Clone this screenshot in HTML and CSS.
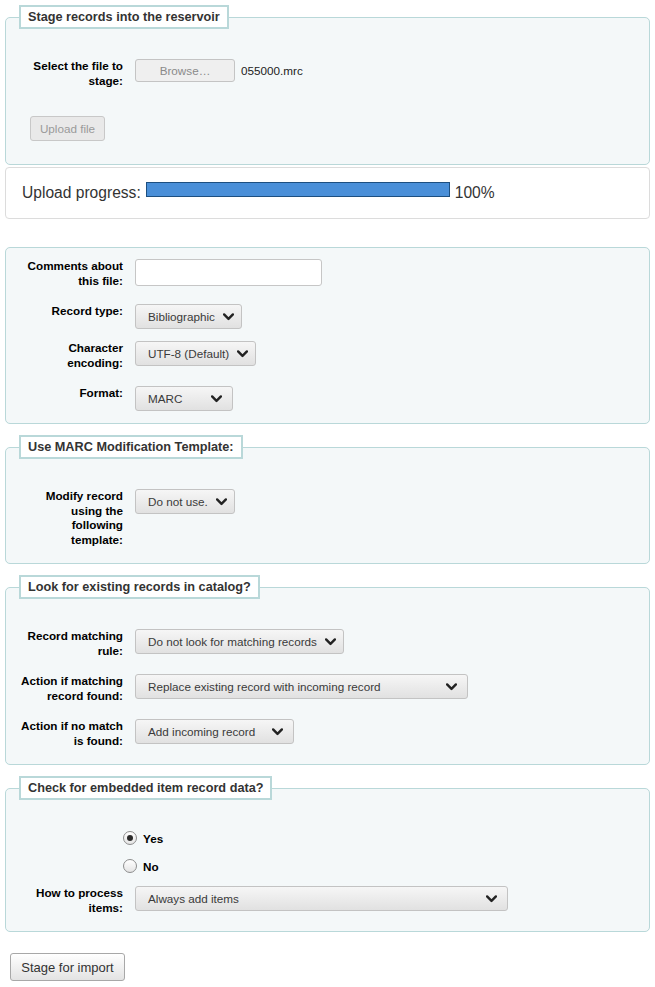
FILE: index.html
```html
<!DOCTYPE html>
<html lang="en">
<head>
<meta charset="utf-8">
<title>Stage records</title>
<link rel="stylesheet" href="styles.css">
</head>
<body>
<svg width="0" height="0" class="defs" aria-hidden="true">
  <defs>
    <symbol id="chev" viewBox="0 0 10 7">
      <polyline points="1,1.2 5,5.2 9,1.2" fill="none" stroke="#222" stroke-width="2.2" stroke-linecap="round" stroke-linejoin="round"/>
    </symbol>
  </defs>
</svg>

<fieldset class="fs fs-first">
  <legend>Stage records into the reservoir</legend>
  <div class="rows">
    <div class="row">
      <div class="lbl">Select the file to stage:</div>
      <div class="ctl">
        <span class="btn-browse">Browse…</span>
        <span class="filename">055000.mrc</span>
      </div>
    </div>
  </div>
  <div class="upload-wrap"><span class="btn-upload">Upload file</span></div>
</fieldset>

<div class="progress">
  <div class="progress-line">
    <span>Upload progress:</span><span class="bar"></span><span>100%</span>
  </div>
</div>

<fieldset class="fs fs-plain">
  <div class="rows">
    <div class="row">
      <div class="lbl">Comments about this file:</div>
      <div class="ctl"><span class="textbox"></span></div>
    </div>
    <div class="row">
      <div class="lbl">Record type:</div>
      <div class="ctl"><span class="sel w-rt"><span>Bibliographic</span><svg class="chev"><use href="#chev"/></svg></span></div>
    </div>
    <div class="row">
      <div class="lbl">Character encoding:</div>
      <div class="ctl"><span class="sel w-enc"><span>UTF-8 (Default)</span><svg class="chev"><use href="#chev"/></svg></span></div>
    </div>
    <div class="row">
      <div class="lbl">Format:</div>
      <div class="ctl"><span class="sel w-fmt"><span>MARC</span><svg class="chev"><use href="#chev"/></svg></span></div>
    </div>
  </div>
</fieldset>

<fieldset class="fs">
  <legend>Use MARC Modification Template:</legend>
  <div class="rows">
    <div class="row">
      <div class="lbl">Modify record using the following template:</div>
      <div class="ctl"><span class="sel w-tpl"><span>Do not use.</span><svg class="chev"><use href="#chev"/></svg></span></div>
    </div>
  </div>
</fieldset>

<fieldset class="fs">
  <legend>Look for existing records in catalog?</legend>
  <div class="rows">
    <div class="row">
      <div class="lbl">Record matching rule:</div>
      <div class="ctl"><span class="sel w-match"><span>Do not look for matching records</span><svg class="chev"><use href="#chev"/></svg></span></div>
    </div>
    <div class="row">
      <div class="lbl">Action if matching record found:</div>
      <div class="ctl"><span class="sel w-replace"><span>Replace existing record with incoming record</span><svg class="chev"><use href="#chev"/></svg></span></div>
    </div>
    <div class="row">
      <div class="lbl">Action if no match is found:</div>
      <div class="ctl"><span class="sel w-add"><span>Add incoming record</span><svg class="chev"><use href="#chev"/></svg></span></div>
    </div>
  </div>
</fieldset>

<fieldset class="fs">
  <legend>Check for embedded item record data?</legend>
  <div class="rows">
    <div class="radio-row"><span class="radio checked"></span><span class="radio-lbl">Yes</span></div>
    <div class="radio-row"><span class="radio"></span><span class="radio-lbl">No</span></div>
    <div class="row">
      <div class="lbl">How to process items:</div>
      <div class="ctl"><span class="sel w-items"><span>Always add items</span><svg class="chev"><use href="#chev"/></svg></span></div>
    </div>
  </div>
</fieldset>

<div class="actions"><span class="btn-stage">Stage for import</span></div>
</body>
</html>
```

FILE: styles.css
```css
html, body {
  margin: 0;
  padding: 0;
  background: #fff;
}
body {
  padding: 5px 5px 0 5px;
  font-family: "Liberation Sans", Arial, sans-serif;
  font-size: 11.7px;
  color: #000;
}
.defs {
  position: absolute;
  width: 0;
  height: 0;
}

.fs {
  margin: 11px 0 0 0;
  padding: 0 10px 6px 10px;
  border: 1px solid #b9d8d9;
  border-radius: 5px;
  background: #f4f8f9;
  min-inline-size: 0;
}
.fs-first {
  margin-top: 0;
}
.fs-plain {
  margin-top: 28px;
}
.fs legend {
  margin-left: 3px;
  padding: 2px 7px;
  border: 2px solid #b9d8d9;
  background: #fff;
  font-size: 12.7px;
  font-weight: bold;
  line-height: 16px;
  color: #333;
}

.rows {
  padding-top: 24px;
}
.fs-plain .rows {
  padding-top: 5px;
}

.row {
  display: grid;
  grid-template-columns: 107px auto;
  column-gap: 12px;
  align-items: start;
  padding: 6px 0;
}
.lbl {
  text-align: right;
  font-weight: bold;
  font-size: 11.7px;
  line-height: 14.5px;
  padding: 0 0 4px 4px;
}
.ctl {
  display: flex;
  align-items: center;
}

.btn-browse {
  box-sizing: border-box;
  width: 100px;
  height: 23px;
  display: inline-flex;
  align-items: center;
  justify-content: center;
  border: 1px solid #c4c4c4;
  border-radius: 3px;
  background: #efefef;
  color: #8a8a8a;
  font-size: 11.7px;
}
.filename {
  margin-left: 6px;
  color: #222;
  font-size: 11.7px;
}

.upload-wrap {
  padding: 18px 0 17px 14px;
}
.btn-upload {
  box-sizing: border-box;
  display: inline-flex;
  align-items: center;
  justify-content: center;
  width: 75px;
  height: 25px;
  border: 1px solid #c8c8c8;
  border-radius: 3px;
  background: #e9e9e9;
  color: #9a9a9a;
  font-size: 11.7px;
}

.progress {
  box-sizing: border-box;
  margin-top: 2px;
  height: 52px;
  border: 1px solid #dcdcdc;
  border-radius: 4px;
  background: #fff;
  padding: 0 16px;
  display: flex;
  align-items: center;
}
.progress-line {
  font-size: 15.6px;
  color: #333;
  line-height: 20px;
  display: flex;
  align-items: baseline;
  gap: 5px;
}
.bar {
  box-sizing: border-box;
  display: inline-block;
  width: 304px;
  height: 15px;
  border: 1px solid #1d4f80;
  background: #4a8fd8;
  position: relative;
  top: -1px;
}

.textbox {
  box-sizing: border-box;
  display: inline-block;
  width: 187px;
  height: 27px;
  border: 1px solid #c6c6c6;
  border-radius: 3px;
  background: #fff;
}

.sel {
  box-sizing: border-box;
  height: 25px;
  display: inline-flex;
  align-items: center;
  justify-content: space-between;
  padding: 0 10px 0 12px;
  border: 1px solid #c3c3c3;
  border-radius: 3px;
  background: linear-gradient(#f6f6f6, #e1e1e1);
  color: #3a3a3a;
  font-size: 11.7px;
  white-space: nowrap;
}
.chev {
  width: 11px;
  height: 8px;
  margin-left: 8px;
  flex: none;
}
.w-rt { width: 107px; }
.w-enc { width: 121px; }
.w-fmt { width: 98px; }
.w-tpl { width: 100px; }
.w-match { width: 209px; }
.w-replace { width: 333px; }
.w-add { width: 159px; }
.w-items { width: 373px; }

.radio-row {
  display: flex;
  align-items: center;
  padding: 7px 0 7px 107px;
  height: 14px;
  gap: 6px;
}
.radio {
  box-sizing: border-box;
  width: 14px;
  height: 14px;
  border-radius: 50%;
  border: 1px solid #8d8d8d;
  background: linear-gradient(#ffffff, #e4e4e4);
  display: inline-flex;
  align-items: center;
  justify-content: center;
}
.radio.checked::after {
  content: "";
  width: 6px;
  height: 6px;
  border-radius: 50%;
  background: #2a2a2a;
}
.radio-lbl {
  font-weight: bold;
  font-size: 11.7px;
}

.actions {
  padding: 21px 0 0 5px;
}
.btn-stage {
  box-sizing: border-box;
  display: inline-flex;
  align-items: center;
  justify-content: center;
  width: 115px;
  height: 28px;
  border: 1px solid #a8a8a8;
  border-radius: 3px;
  background: linear-gradient(#ffffff, #e3e3e3);
  color: #333;
  font-size: 13px;
}
```
